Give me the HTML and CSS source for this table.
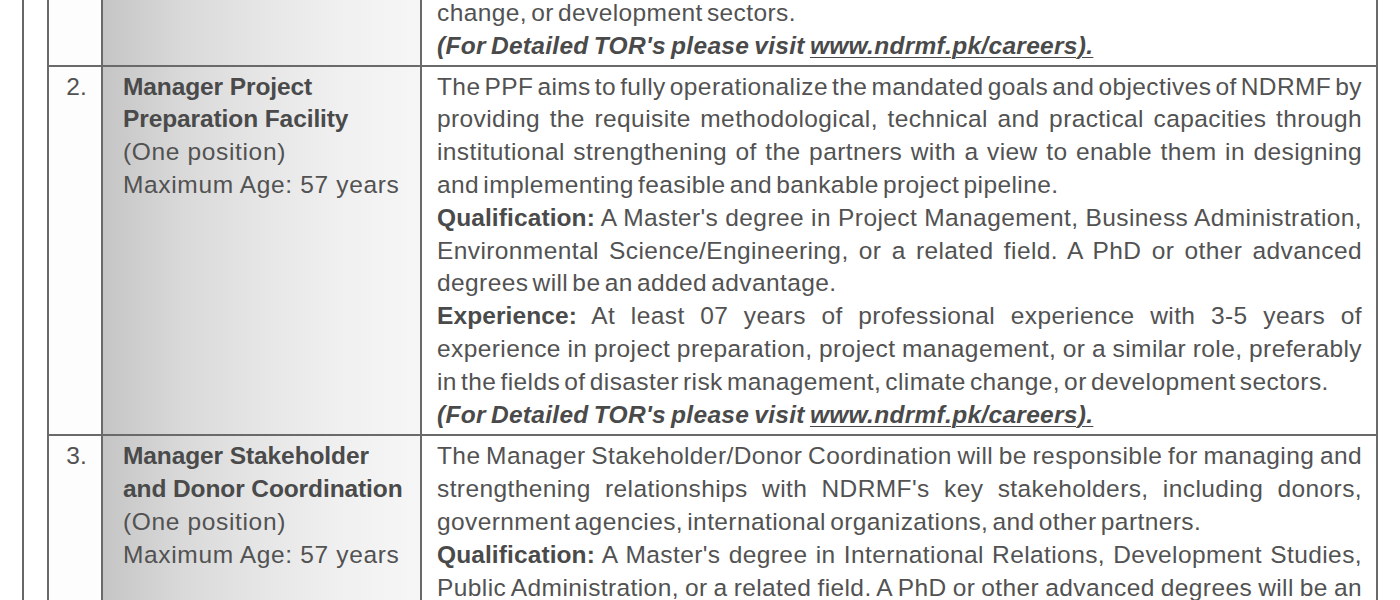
FILE: index.html
```html
<!DOCTYPE html>
<html lang="en">
<head>
<meta charset="utf-8">
<title>NDRMF Positions</title>
<link rel="stylesheet" href="styles.css">
</head>
<body>
<div class="frame">
  <table class="jobs">
    <colgroup>
      <col class="c-no">
      <col class="c-title">
      <col class="c-desc">
    </colgroup>
    <tr class="cont">
      <td class="no"></td>
      <td class="title"></td>
      <td class="desc">
        <span class="ln end">change, or development sectors.</span>
        <span class="ln end tor">(For Detailed TOR's please visit <u>www.ndrmf.pk/careers).</u></span>
      </td>
    </tr>
    <tr>
      <td class="no">2.</td>
      <td class="title">
        <b>Manager Project<br>Preparation Facility</b><br>
        (One position)<br>
        Maximum Age: 57 years
      </td>
      <td class="desc">
        <span class="ln tight">The PPF aims to fully operationalize the mandated goals and objectives of NDRMF by</span>
        <span class="ln">providing the requisite methodological, technical and practical capacities through</span>
        <span class="ln">institutional strengthening of the partners with a view to enable them in designing</span>
        <span class="ln end">and implementing feasible and bankable project pipeline.</span>
        <span class="ln tight"><b>Qualification:</b> A Master's degree in Project Management, Business Administration,</span>
        <span class="ln">Environmental Science/Engineering, or a related field. A PhD or other advanced</span>
        <span class="ln end">degrees will be an added advantage.</span>
        <span class="ln"><b>Experience:</b> At least 07 years of professional experience with 3-5 years of</span>
        <span class="ln tight">experience in project preparation, project management, or a similar role, preferably</span>
        <span class="ln end">in the fields of disaster risk management, climate change, or development sectors.</span>
        <span class="ln end tor">(For Detailed TOR's please visit <u>www.ndrmf.pk/careers).</u></span>
      </td>
    </tr>
    <tr>
      <td class="no">3.</td>
      <td class="title">
        <b>Manager Stakeholder<br>and Donor Coordination</b><br>
        (One position)<br>
        Maximum Age: 57 years
      </td>
      <td class="desc">
        <span class="ln tight">The Manager Stakeholder/Donor Coordination will be responsible for managing and</span>
        <span class="ln">strengthening relationships with NDRMF's key stakeholders, including donors,</span>
        <span class="ln end">government agencies, international organizations, and other partners.</span>
        <span class="ln tight"><b>Qualification:</b> A Master's degree in International Relations, Development Studies,</span>
        <span class="ln tight">Public Administration, or a related field. A PhD or other advanced degrees will be an</span>
      </td>
    </tr>
  </table>
</div>
</body>
</html>
```

FILE: styles.css
```css
html, body {
  margin: 0;
  padding: 0;
  background: #ffffff;
}

body {
  width: 1400px;
  height: 600px;
  overflow: hidden;
  font-family: "Liberation Sans", Arial, sans-serif;
  font-size: 24.5px;
  line-height: 32.8px;
  color: #525252;
}

.frame {
  margin-left: 22px;
  border-left: 2px solid #676767;
  padding-left: 23px;
  height: 600px;
  overflow: hidden;
}

.jobs {
  margin-top: -9px;
  border-collapse: collapse;
  table-layout: fixed;
  width: 1331px;
}

.c-no { width: 54px; }
.c-title { width: 319px; }

.jobs td {
  border: 2px solid #6a6a6a;
  vertical-align: top;
  padding: 4px 0 3px 0;
}

.jobs .cont td {
  padding-bottom: 2px;
}

.no {
  text-align: center;
  padding-left: 3px !important;
  background: #fdfdfd;
}

.title {
  padding-left: 20px !important;
  letter-spacing: 0.65px;
  background: linear-gradient(to right, #c5c5c5 0%, #d9d9d9 25%, #e6e6e6 50%, #f0f0f0 75%, #f6f6f6 100%);
}

.title b {
  color: #4a4a4a;
  letter-spacing: -0.1px;
}

.desc {
  padding-left: 15px !important;
  padding-right: 14px !important;
  background: #ffffff;
  letter-spacing: 0.4px;
  word-spacing: -3px;
}

.ln {
  display: block;
  white-space: nowrap;
  text-align: justify;
  text-align-last: justify;
}

.ln.tight {
  word-spacing: -6px;
}

.ln.end {
  text-align-last: left;
}

.desc b {
  color: #4a4a4a;
  letter-spacing: 0.1px;
}

.tor {
  font-weight: bold;
  font-style: italic;
  color: #4a4a4a;
  letter-spacing: 0.3px;
  word-spacing: -2px;
}

.tor u {
  text-decoration-thickness: 1px;
  text-underline-offset: 3px;
}
```
